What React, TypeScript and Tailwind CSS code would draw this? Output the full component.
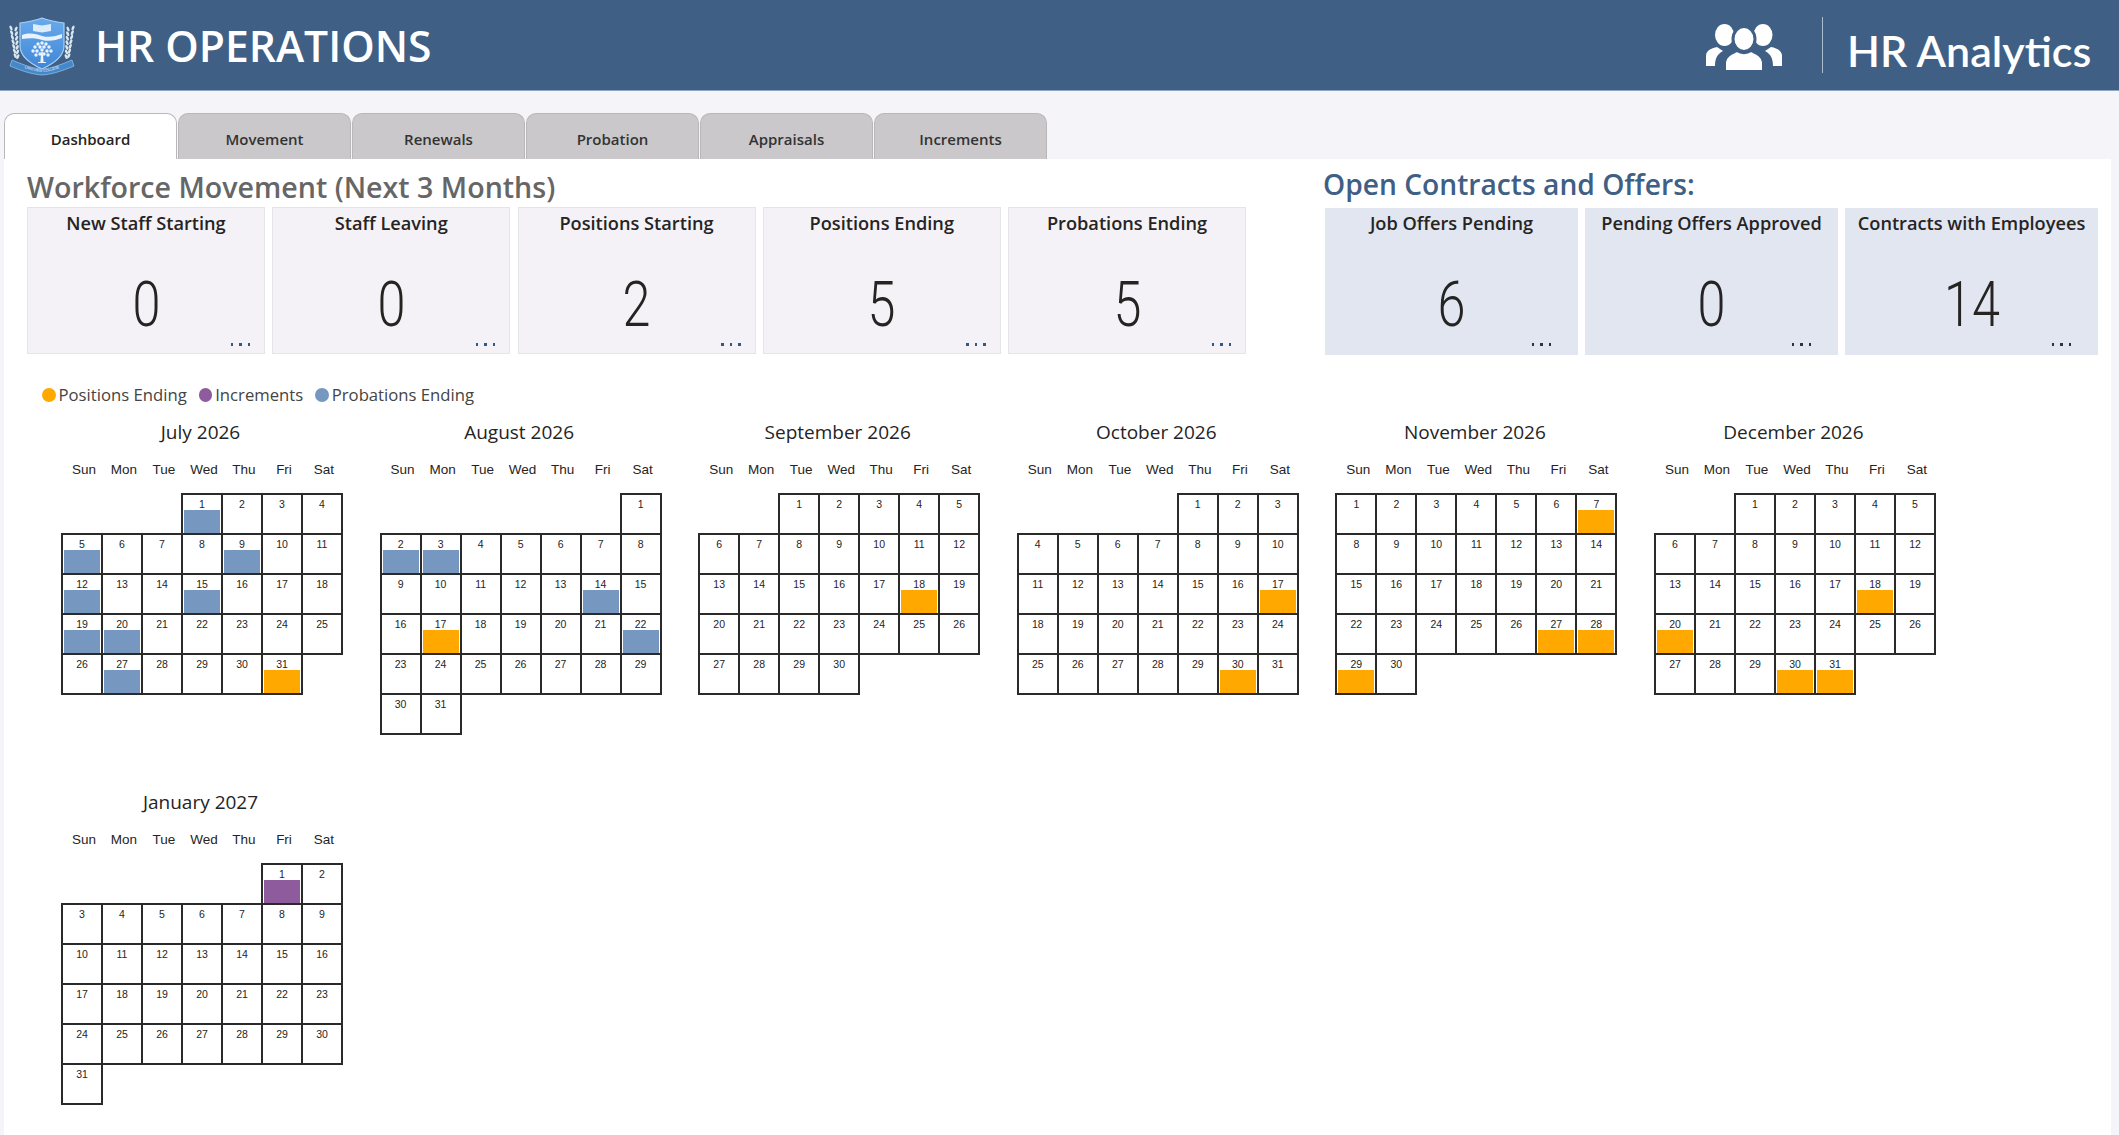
const BLUE = "bg-[#7597c0]";
const ORANGE = "bg-[#ffa800]";
const PURPLE = "bg-[#8e5b9c]";

const weekDays = ["Sun", "Mon", "Tue", "Wed", "Thu", "Fri", "Sat"];

const months = [
  { name: "July 2026", start: 3, days: 31, bars: { 1: BLUE, 5: BLUE, 9: BLUE, 12: BLUE, 15: BLUE, 19: BLUE, 20: BLUE, 27: BLUE, 31: ORANGE } },
  { name: "August 2026", start: 6, days: 31, bars: { 2: BLUE, 3: BLUE, 14: BLUE, 17: ORANGE, 22: BLUE } },
  { name: "September 2026", start: 2, days: 30, bars: { 18: ORANGE } },
  { name: "October 2026", start: 4, days: 31, bars: { 17: ORANGE, 30: ORANGE } },
  { name: "November 2026", start: 0, days: 30, bars: { 7: ORANGE, 27: ORANGE, 28: ORANGE, 29: ORANGE } },
  { name: "December 2026", start: 2, days: 31, bars: { 18: ORANGE, 20: ORANGE, 30: ORANGE, 31: ORANGE } },
  { name: "January 2027", start: 5, days: 31, bars: { 1: PURPLE } },
] as { name: string; start: number; days: number; bars: Record<number, string> }[];

const tabs = ["Dashboard", "Movement", "Renewals", "Probation", "Appraisals", "Increments"];

const movementCards = [
  { title: "New Staff Starting", value: "0" },
  { title: "Staff Leaving", value: "0" },
  { title: "Positions Starting", value: "2" },
  { title: "Positions Ending", value: "5" },
  { title: "Probations Ending", value: "5" },
];

const contractCards = [
  { title: "Job Offers Pending", value: "6" },
  { title: "Pending Offers Approved", value: "0" },
  { title: "Contracts with Employees", value: "14" },
];

const legend = [
  { label: "Positions Ending", color: ORANGE },
  { label: "Increments", color: PURPLE },
  { label: "Probations Ending", color: BLUE },
];

const canopy = [
  [42, 33], [38, 34], [46, 34], [35, 37], [40, 37], [44, 37], [49, 37],
  [33, 41], [37, 41], [42, 40], [47, 41], [51, 41], [36, 45], [40, 44], [44, 44], [48, 45],
];

function CollegeLogo() {
  const leaves = [0, 1, 2, 3, 4, 5, 6];
  return (
    <svg viewBox="0 0 85 80" className="mt-[10px] h-[80px] w-[85px] shrink-0">
      <defs>
        <linearGradient id="shield" x1="0" y1="0" x2="0" y2="1">
          <stop offset="0" stopColor="#69aaec" />
          <stop offset="1" stopColor="#3f86d6" />
        </linearGradient>
        <path id="ribbon" d="M15 54 C26 59 34 61.5 42 62 C50 61.5 58 59 69 54" fill="none" />
      </defs>
      {leaves.map((i) => (
        <g key={i} fill="#dbe6ee">
          <ellipse cx={11 + i * 0.7} cy={18 + i * 4.6} rx="1.3" ry="2.6" transform={`rotate(-25 ${11 + i * 0.7} ${18 + i * 4.6})`} />
          <ellipse cx={16 + i * 0.3} cy={19 + i * 4.6} rx="1.3" ry="2.6" transform={`rotate(25 ${16 + i * 0.3} ${19 + i * 4.6})`} />
          <ellipse cx={73 - i * 0.7} cy={18 + i * 4.6} rx="1.3" ry="2.6" transform={`rotate(25 ${73 - i * 0.7} ${18 + i * 4.6})`} />
          <ellipse cx={68 - i * 0.3} cy={19 + i * 4.6} rx="1.3" ry="2.6" transform={`rotate(-25 ${68 - i * 0.3} ${19 + i * 4.6})`} />
        </g>
      ))}
      <path d="M42 8 C50 11 57 12 64 13 L64 36 C64 47 53 54 42 59 C31 54 20 47 20 36 L20 13 C27 12 34 11 42 8 Z" fill="url(#shield)" stroke="#a9d0f5" strokeWidth="1.2" />
      <path d="M33 14 L42 15.5 L51 14 V21 L42 22.5 L33 21 Z" fill="#dcecfb" />
      <path d="M22 25 C30 22 36 24 42 26 C50 28 56 26 62 24 V28 C56 30 50 32 42 30 C36 28 30 28 22 29 Z" fill="#e8f3fd" />
      <g fill="#e8f3fd">
        {canopy.map(([cx, cy]) => (
          <circle key={`${cx}-${cy}`} cx={cx} cy={cy} r="1.7" />
        ))}
        <path d="M41.2 42 H42.8 L43.6 52 H46 V53 H38 V52 H40.4 Z" />
      </g>
      <path d="M12 50 C26 56 34 58.5 42 59 C50 58.5 58 56 72 50 L74 56 C60 62 50 64.5 42 65 C34 64.5 24 62 10 56 Z" fill="#4488cc" stroke="#a9d0f5" strokeWidth="0.6" />
      <text fill="#e8f3fd" className="font-['Liberation_Sans',sans-serif] text-[3.6px]">
        <textPath href="#ribbon" startOffset="50%" textAnchor="middle">
          LAKEVIEW COLLEGE
        </textPath>
      </text>
    </svg>
  );
}

function PeopleIcon() {
  return (
    <svg viewBox="0 0 100 70" className="h-[70px] w-[100px] shrink-0" fill="#fff">
      <ellipse cx="29.5" cy="25" rx="9.5" ry="11" />
      <ellipse cx="68" cy="25" rx="9.5" ry="11" />
      <path d="M11 56 V45 C12 40 17 38 22 37 L28 41 C22 44 20 49 20 56 Z" />
      <path d="M87 56 V45 C86 40 81 38 76 37 L70 41 C76 44 78 49 78 56 Z" />
      <ellipse cx="49" cy="29" rx="11" ry="12.5" stroke="#3f6084" strokeWidth="3" />
      <path d="M30 61 V52 C31 46 36 44 42 41 C46 44 52 44 56 41 C62 44 67 46 68 52 V61 Z" stroke="#3f6084" strokeWidth="2" />
    </svg>
  );
}

function KpiCard({ title, value, tone }: { title: string; value: string; tone: "gray" | "blue" }) {
  const isGray = tone === "gray";
  return (
    <div
      className={
        isGray
          ? "flex h-[147px] w-[238px] flex-col items-center border border-[#e6e4e8] bg-[#f4f2f6]"
          : "flex h-[147px] w-[253px] flex-col items-center bg-[#e1e6f1]"
      }
    >
      <div className="mt-[3px] h-[24px] text-[18.2px] leading-[24px] font-semibold text-[#252423]">{title}</div>
      <div className="mt-[39px] h-[62px] scale-x-[0.8] font-['Roboto',sans-serif] text-[63px] leading-[62px] font-light text-[#252423]">
        {value}
      </div>
      <div className={isGray ? "mt-[7px] flex w-full justify-end gap-[6px] pr-[14px]" : "mt-[7px] flex w-full justify-end gap-[6px] pr-[27px]"}>
        <span className={isGray ? "h-[2.5px] w-[2.5px] bg-[#2f5a87]" : "h-[2.5px] w-[2.5px] bg-[#333]"} />
        <span className={isGray ? "h-[2.5px] w-[2.5px] bg-[#2f5a87]" : "h-[2.5px] w-[2.5px] bg-[#333]"} />
        <span className={isGray ? "h-[2.5px] w-[2.5px] bg-[#2f5a87]" : "h-[2.5px] w-[2.5px] bg-[#333]"} />
      </div>
    </div>
  );
}

function MonthCalendar({ name, start, days, bars }: { name: string; start: number; days: number; bars: Record<number, string> }) {
  return (
    <div className="w-[280px]">
      <div className="-ml-[3px] h-[28px] text-center text-[19px] leading-[28px] text-[#252423]">{name}</div>
      <div className="mt-[15px] ml-[2px] grid h-[24px] grid-cols-[repeat(7,40px)] text-center font-['Liberation_Sans',sans-serif] text-[13.5px] leading-[18px] text-[#252423]">
        {weekDays.map((d) => (
          <div key={d}>{d}</div>
        ))}
      </div>
      <div className="mt-[9px] grid grid-cols-[repeat(7,40px)] auto-rows-[40px]">
        {Array.from({ length: start }, (_, i) => (
          <div key={`blank-${i}`} />
        ))}
        {Array.from({ length: days }, (_, i) => i + 1).map((day) => (
          <div key={day} className="flex flex-col outline-2 -outline-offset-1 outline-[#2a2a2a]">
            <div className="h-[16px] pt-[4px] text-center font-['Liberation_Sans',sans-serif] text-[10.5px] leading-[12px] text-[#252423]">
              {day}
            </div>
            {bars[day] && <div className={`mx-[2px] mb-[1px] flex-1 ${bars[day]}`} />}
          </div>
        ))}
      </div>
    </div>
  );
}

export default function App() {
  return (
    <div className="h-[1135px] w-[2119px] overflow-hidden bg-[#f5f4f9] font-['Open_Sans',sans-serif]">
      {/* Header */}
      <header className="flex h-[91px] items-center border-b border-[#8ea6be] bg-[#3f6084]">
        <CollegeLogo />
        <h1 className="mt-[2px] ml-[10px] text-[42.6px] font-semibold text-white">HR OPERATIONS</h1>
        <div className="ml-auto flex items-center">
          <PeopleIcon />
          <div className="ml-[27px] h-[56px] w-px bg-[#a9bccf]" />
          <div className="mt-[13px] ml-[24px] w-[272px] font-['Lato',sans-serif] text-[43px] font-semibold text-white">HR Analytics</div>
        </div>
      </header>

      {/* Tabs */}
      <div className="ml-[4px] flex gap-[1px] pt-[22px]">
        {tabs.map((tab, i) => (
          <div
            key={tab}
            className={
              i === 0
                ? "flex h-[46px] w-[173px] items-center justify-center rounded-t-[10px] border border-b-0 border-[#b9b7ba] bg-white pt-[6px] text-[15px] font-semibold text-[#252423]"
                : "flex h-[46px] w-[173px] items-center justify-center rounded-t-[10px] border border-b-0 border-[#b9b7ba] bg-[#cac8ca] pt-[6px] text-[15px] font-semibold text-[#333]"
            }
          >
            {tab}
          </div>
        ))}
      </div>

      {/* Main panel */}
      <main className="ml-[4px] h-[976px] w-[2107px] bg-white">
        <div className="flex">
          <section className="ml-[23px] w-[1298px]">
            <h2 className="h-[48px] pt-[7px] text-[28.6px] leading-[42px] font-semibold text-[#666666]">Workforce Movement (Next 3 Months)</h2>
            <div className="flex gap-[7.25px]">
              {movementCards.map((card) => (
                <KpiCard key={card.title} title={card.title} value={card.value} tone="gray" />
              ))}
            </div>
          </section>
          <section>
            <h2 className="-ml-[2px] h-[49px] pt-[5px] text-[28.2px] leading-[40px] font-semibold text-[#3f6084]">Open Contracts and Offers:</h2>
            <div className="flex gap-[7px]">
              {contractCards.map((card) => (
                <KpiCard key={card.title} title={card.title} value={card.value} tone="blue" />
              ))}
            </div>
          </section>
        </div>

        {/* Legend */}
        <div className="mt-[28px] ml-[38px] flex h-[24px] items-center gap-[12px] text-[16.7px] text-[#444]">
          {legend.map((item) => (
            <div key={item.label} className="flex items-center gap-[3px]">
              <span className={`h-[13.5px] w-[13.5px] rounded-full ${item.color}`} />
              <span>{item.label}</span>
            </div>
          ))}
        </div>

        {/* Calendars */}
        <div className="mt-[11px] ml-[58px] grid grid-cols-[repeat(6,318.6px)] auto-rows-[370px]">
          {months.map((m) => (
            <MonthCalendar key={m.name} name={m.name} start={m.start} days={m.days} bars={m.bars} />
          ))}
        </div>
      </main>
    </div>
  );
}
